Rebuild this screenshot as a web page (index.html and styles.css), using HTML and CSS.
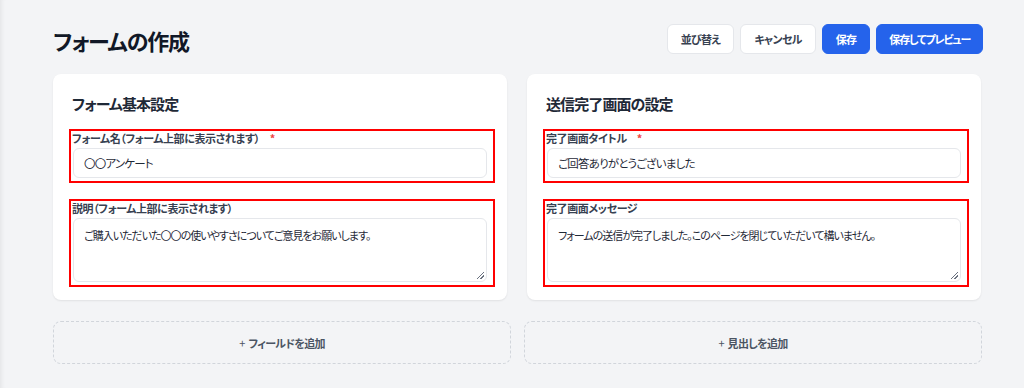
FILE: index.html
```html
<!DOCTYPE html>
<html lang="ja">
<head>
<meta charset="utf-8">
<title>フォームの作成</title>
<link rel="stylesheet" href="styles.css">
</head>
<body>
<div class="page">
  <header class="header">
    <h1 class="title">フォームの作成</h1>
    <div class="actions">
      <button class="btn btn-light">並び替え</button>
      <button class="btn btn-light">キャンセル</button>
      <button class="btn btn-primary">保存</button>
      <button class="btn btn-primary btn-wide">保存してプレビュー</button>
    </div>
  </header>

  <div class="cards">
    <section class="card">
      <h2 class="card-title">フォーム基本設定</h2>
      <div class="field marked">
        <label class="label">フォーム名（フォーム上部に表示されます） <span class="req">*</span></label>
        <div class="input">〇〇アンケート</div>
      </div>
      <div class="field marked">
        <label class="label">説明（フォーム上部に表示されます）</label>
        <div class="textarea">ご購入いただいた〇〇の使いやすさについてご意見をお願いします。<span class="grip"></span></div>
      </div>
    </section>
    <section class="card">
      <h2 class="card-title">送信完了画面の設定</h2>
      <div class="field marked">
        <label class="label">完了画面タイトル <span class="req">*</span></label>
        <div class="input">ご回答ありがとうございました</div>
      </div>
      <div class="field marked">
        <label class="label">完了画面メッセージ</label>
        <div class="textarea">フォームの送信が完了しました。このページを閉じていただいて構いません。<span class="grip"></span></div>
      </div>
    </section>
  </div>

  <div class="adders">
    <button class="adder"><span class="plus">+</span> フィールドを追加</button>
    <button class="adder"><span class="plus">+</span> 見出しを追加</button>
  </div>
</div>
</body>
</html>
```

FILE: styles.css
```css
* { box-sizing: border-box; }

html, body {
  margin: 0;
  padding: 0;
}

body {
  background: #f3f4f6;
  font-family: "Noto Sans CJK JP", "Noto Sans", sans-serif;
  font-feature-settings: "palt";
  color: #1f2937;
  height: 388px;
  overflow: hidden;
  box-shadow: inset 5px 0 5px -4px rgba(0, 0, 0, 0.08);
}

.page {
  width: 929px;
  margin-left: 53px;
  padding-top: 24px;
}

.header {
  display: flex;
  align-items: center;
  justify-content: space-between;
  height: 30px;
}

.title {
  margin: 2px 0 0 0;
  font-size: 22px;
  font-weight: 700;
  letter-spacing: -1.2px;
  line-height: 30px;
  color: #111827;
}

.actions {
  display: flex;
  gap: 6px;
  margin-right: -1px;
}

.btn {
  height: 30px;
  padding: 0 13px;
  border-radius: 6px;
  font-family: inherit;
  font-feature-settings: "palt";
  font-size: 11px;
  font-weight: 700;
  letter-spacing: -0.7px;
  line-height: 1;
  cursor: pointer;
}

.btn-wide {
  letter-spacing: -1.2px;
  padding: 0 12px;
}

.btn-light {
  background: #ffffff;
  border: 1px solid #e5e7eb;
  color: #374151;
}

.btn-primary {
  background: #2563eb;
  border: 1px solid #2563eb;
  color: #ffffff;
}

.cards {
  display: grid;
  grid-template-columns: 454px 454px;
  gap: 20px;
  margin-top: 20px;
}

.card {
  background: #ffffff;
  border-radius: 8px;
  box-shadow: 0 1px 2px rgba(0, 0, 0, 0.08);
  padding: 18px 20px 18px 19px;
  display: flex;
  flex-direction: column;
  gap: 22px;
}

.card-title {
  margin: 0 0 -8px 0;
  font-size: 15px;
  font-weight: 700;
  letter-spacing: -0.9px;
  line-height: 24px;
  color: #1f2937;
}

.field {
  position: relative;
  display: flex;
  flex-direction: column;
  gap: 2px;
}

.marked::after {
  content: "";
  position: absolute;
  top: -1px;
  left: -3px;
  right: -8px;
  bottom: -5px;
  border: 2px solid #ff0000;
  pointer-events: none;
}

.label {
  font-size: 11px;
  font-weight: 700;
  letter-spacing: -0.4px;
  line-height: 16px;
  color: #374151;
}

.req {
  color: #ef4444;
  margin-left: 8px;
}

.input {
  height: 30px;
  margin-left: 1px;
  border: 1px solid #e5e7eb;
  border-radius: 6px;
  padding: 0 10px;
  font-size: 11.5px;
  letter-spacing: -0.8px;
  line-height: 28px;
  color: #1f2937;
}

.textarea {
  position: relative;
  height: 64px;
  margin-left: 1px;
  border: 1px solid #e5e7eb;
  border-radius: 6px;
  padding: 7px 10px;
  font-size: 11px;
  letter-spacing: -1px;
  line-height: 18px;
  color: #1f2937;
}

.grip {
  position: absolute;
  right: 2px;
  bottom: 2px;
  width: 7px;
  height: 7px;
  background: linear-gradient(135deg, transparent 45%, #6b7280 45%, #6b7280 55%, transparent 55%, transparent 70%, #6b7280 70%, #6b7280 80%, transparent 80%);
}

.adders {
  display: grid;
  grid-template-columns: 458px 458px;
  gap: 13px;
  margin-top: 21px;
}

.adder {
  height: 43px;
  background: transparent;
  border: 1px dashed #d1d5db;
  border-radius: 8px;
  font-family: inherit;
  font-feature-settings: "palt";
  font-size: 11px;
  font-weight: 700;
  letter-spacing: -0.7px;
  color: #4b5563;
  cursor: pointer;
}

.plus {
  font-weight: 400;
  margin-right: 2px;
}
```
